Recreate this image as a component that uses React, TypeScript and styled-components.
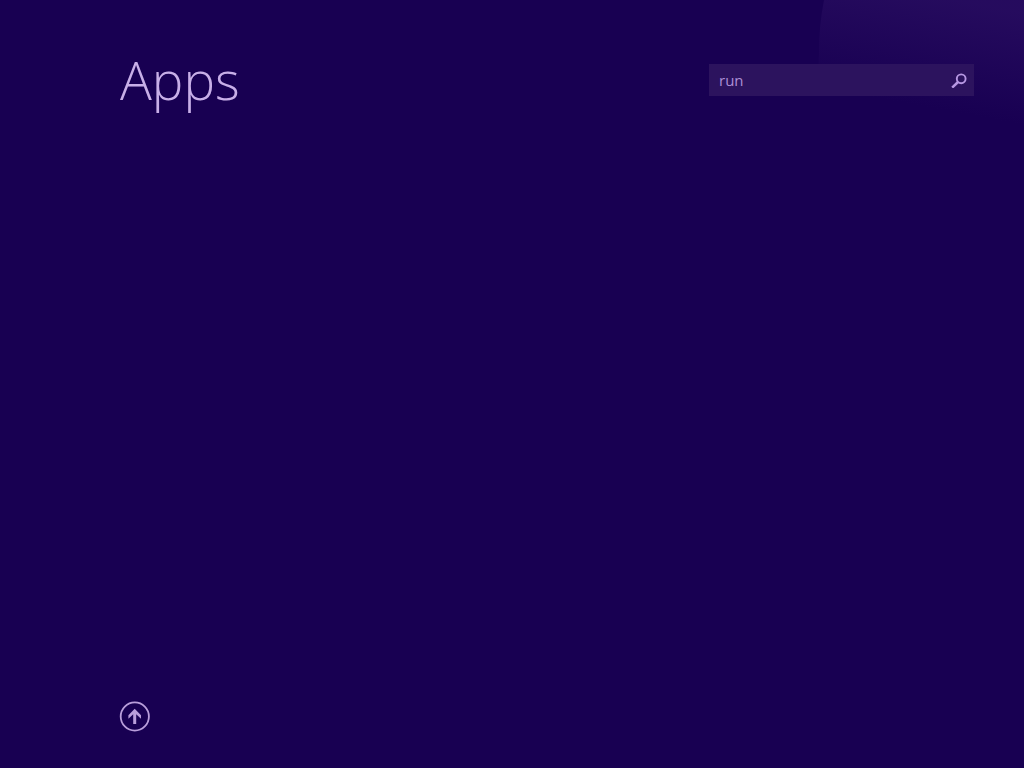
import React from "react";
import styled, { createGlobalStyle } from "styled-components";

const GlobalStyle = createGlobalStyle`
  * {
    box-sizing: border-box;
  }
  body {
    margin: 0;
    background: #180052;
    color: #c8afe8;
    font-family: "Open Sans", "Noto Sans", sans-serif;
  }
`;

const Screen = styled.div`
  position: relative;
  display: flex;
  flex-direction: column;
  justify-content: space-between;
  min-height: 100vh;
  overflow: hidden;
`;

const CornerGlow = styled.svg`
  position: absolute;
  top: 0;
  right: 0;
  width: 208px;
  height: 128px;
`;

const Header = styled.header`
  position: relative;
  display: flex;
  align-items: center;
  justify-content: space-between;
  padding: 40px 50px 0 120px;
`;

const Title = styled.h1`
  margin: 0;
  font-size: 53px;
  font-weight: 300;
  line-height: 80px;
`;

const SearchBox = styled.form`
  display: flex;
  align-items: center;
  width: 265px;
  height: 32px;
  background: #2c135e;
`;

const SearchInput = styled.input`
  flex: 1;
  min-width: 0;
  height: 32px;
  padding: 0 10px;
  border: 0;
  outline: 0;
  background: transparent;
  color: #ac8fd6;
  font: 400 15px/20px "Open Sans", "Noto Sans", sans-serif;
`;

const SearchButton = styled.button`
  display: flex;
  align-items: center;
  justify-content: center;
  width: 30px;
  height: 32px;
  padding: 0;
  border: 0;
  background: transparent;
  color: #b798e3;
`;

const Footer = styled.footer`
  display: flex;
  padding: 0 119px 36px;
`;

const UpButton = styled.button`
  display: flex;
  padding: 0;
  border: 0;
  background: transparent;
  color: #b99edb;
`;

export default function App() {
  return (
    <>
      <GlobalStyle />
      <Screen>
        <CornerGlow viewBox="0 0 208 128" aria-hidden="true">
          <defs>
            <linearGradient id="glow" x1="0.35" y1="1" x2="0.65" y2="0">
              <stop offset="0.2" stopColor="#280d60" stopOpacity="0" />
              <stop offset="1" stopColor="#280d60" stopOpacity="0.85" />
            </linearGradient>
          </defs>
          <path d="M8 0Q3 25 3 52L0 128H208V0Z" fill="url(#glow)" />
        </CornerGlow>
        <Header>
          <Title>Apps</Title>
          <SearchBox role="search" onSubmit={(e) => e.preventDefault()}>
            <SearchInput type="text" aria-label="Search apps" defaultValue="run" />
            <SearchButton type="submit" aria-label="Search">
              <svg width="16" height="16" viewBox="0 0 16 16" fill="none" stroke="currentColor">
                <circle cx="10.2" cy="6.8" r="4.4" strokeWidth="1.9" />
                <path d="M7 10L1.2 15.6" strokeWidth="2.5" />
              </svg>
            </SearchButton>
          </SearchBox>
        </Header>
        <Footer>
          <UpButton type="button" aria-label="Back to Start">
            <svg width="31" height="31" viewBox="0 0 31 31" fill="none">
              <circle cx="15.8" cy="15.5" r="14.1" stroke="currentColor" strokeWidth="1.8" />
              <path
                d="M15.7 7.8L22 14.2V17.8L17.2 13.2V23H14.2V13.2L9.4 17.8V14.2Z"
                fill="currentColor"
              />
            </svg>
          </UpButton>
        </Footer>
      </Screen>
    </>
  );
}
